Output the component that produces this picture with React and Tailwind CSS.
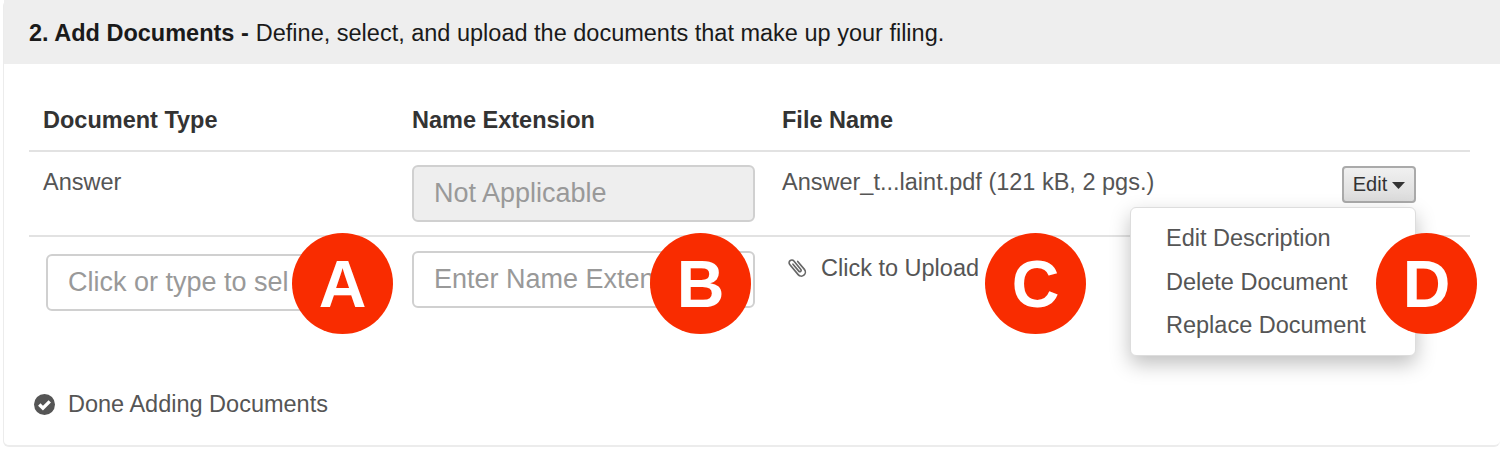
import React from "react";

const font = "font-['Liberation_Sans',Arial,sans-serif]";

function Badge({ letter, className }) {
  return (
    <div
      className={`absolute z-20 w-[101px] h-[101px] rounded-full bg-[#f92c00] text-white flex items-center justify-center text-[66px] font-bold leading-none ${className}`}
    >
      {letter}
    </div>
  );
}

export default function App() {
  return (
    <div className={`${font} w-[1500px] h-[450px] bg-white overflow-hidden`}>
      <div className="ml-[3px] h-[447px] bg-white rounded-b-md rounded-tl-md border-b-2 border-l border-[#ececec] relative">
        {/* HEADER */}
        <div className="h-[64px] bg-[#eeeeee] flex items-center pl-[25px] pt-[3px] text-[23.5px] text-[#1a1a1a]">
          <span className="font-bold mr-[7px]">2. Add Documents -</span>
          <span>Define, select, and upload the documents that make up your filing.</span>
        </div>

        <div className="pl-[25px] pr-[30px] pt-[37px]">
          {/* COLUMN TITLES */}
          <div className="flex h-[51px] border-b-2 border-[#e2e2e2] text-[23.5px] font-bold text-[#333333] leading-[38px]">
            <div className="w-[370px] pl-[14px]">Document Type</div>
            <div className="w-[370px] pl-[13px]">Name Extension</div>
            <div className="pl-[13px]">File Name</div>
          </div>

          {/* ROW 1 */}
          <div className="flex h-[85px] border-b-2 border-[#e2e2e2] text-[23.5px] text-[#555555]">
            <div className="w-[370px] pl-[14px] pt-[13px]">Answer</div>
            <div className="w-[370px] pl-[13px] pt-[13px]">
              <div className="w-[343px] h-[57px] rounded-md border-2 border-[#d0d0d0] bg-[#eeeeee] text-[#999999] text-[27px] flex items-center pl-[20px]">
                Not Applicable
              </div>
            </div>
            <div className="pl-[13px] pt-[13px] w-[573px]">Answer_t...laint.pdf (121 kB, 2 pgs.)</div>
            <div className="pt-[14px]">
              <div className="w-[74px] h-[37px] pb-[1px] rounded-[4px] border-2 border-[#aaaaaa] bg-gradient-to-b from-[#f0f0f0] to-[#dcdcdc] text-[#333333] text-[20px] flex items-center justify-center">
                Edit
                <svg className="ml-[5px] mt-[2px]" width="13" height="7" viewBox="0 0 13 7">
                  <path d="M0 0h13L6.5 7z" fill="#333333" />
                </svg>
              </div>
            </div>
          </div>

          {/* ROW 2 */}
          <div className="flex h-[150px] text-[23.5px] text-[#555555]">
            <div className="w-[370px] pl-[17px] pt-[17px]">
              <div className="w-[320px] h-[57px] rounded-md border-2 border-[#d0d0d0] text-[#999999] text-[27px] flex items-center pl-[20px] whitespace-nowrap overflow-hidden">
                Click or type to sel
              </div>
            </div>
            <div className="w-[370px] pl-[13px] pt-[14px]">
              <div className="w-[343px] h-[57px] rounded-md border-2 border-[#d0d0d0] text-[#999999] text-[27px] flex items-center pl-[20px] whitespace-nowrap overflow-hidden">
                Enter Name Exten
              </div>
            </div>
            <div className="pl-[19px] pt-[14px] flex items-start">
              <svg width="19" height="21" viewBox="0 0 21 23" className="mt-[6px] mr-[14px]">
                <path
                  transform="translate(10.5 11.5) rotate(-40) translate(-5.5 -12)"
                  d="M4 6V16a1.5 1.5 0 0 0 3 0V4a3 3 0 0 0-6 0V18.5a4.5 4.5 0 0 0 9 0V7"
                  fill="none"
                  stroke="#666666"
                  strokeWidth="1.8"
                  strokeLinecap="round"
                />
              </svg>
              <span className="text-[#555555]">Click to Upload</span>
            </div>
          </div>

          {/* DONE */}
          <div className="flex items-center pl-[5px] text-[23.5px] text-[#555555]">
            <svg width="21" height="21" viewBox="0 0 20 20" className="mr-[13px]">
              <circle cx="10" cy="10" r="10" fill="#555555" />
              <path d="M5 10l3.5 3.5L15 7" fill="none" stroke="#ffffff" strokeWidth="3.2" />
            </svg>
            Done Adding Documents
          </div>
        </div>

        {/* EDIT MENU */}
        <div className="absolute z-10 left-[1126px] top-[207px] w-[286px] h-[149px] bg-white rounded-md border border-[#dddddd] shadow-[0_8px_20px_rgba(0,0,0,0.25)] pl-[35px] pt-[9px] text-[23.5px] text-[#555555] leading-[43.5px]">
          <div>Edit Description</div>
          <div>Delete Document</div>
          <div>Replace Document</div>
        </div>

        <Badge letter="A" className="left-[288px] top-[233px]" />
        <Badge letter="B" className="left-[646px] top-[233px]" />
        <Badge letter="C" className="left-[981px] top-[233px]" />
        <Badge letter="D" className="left-[1372px] top-[233px]" />
      </div>
    </div>
  );
}
